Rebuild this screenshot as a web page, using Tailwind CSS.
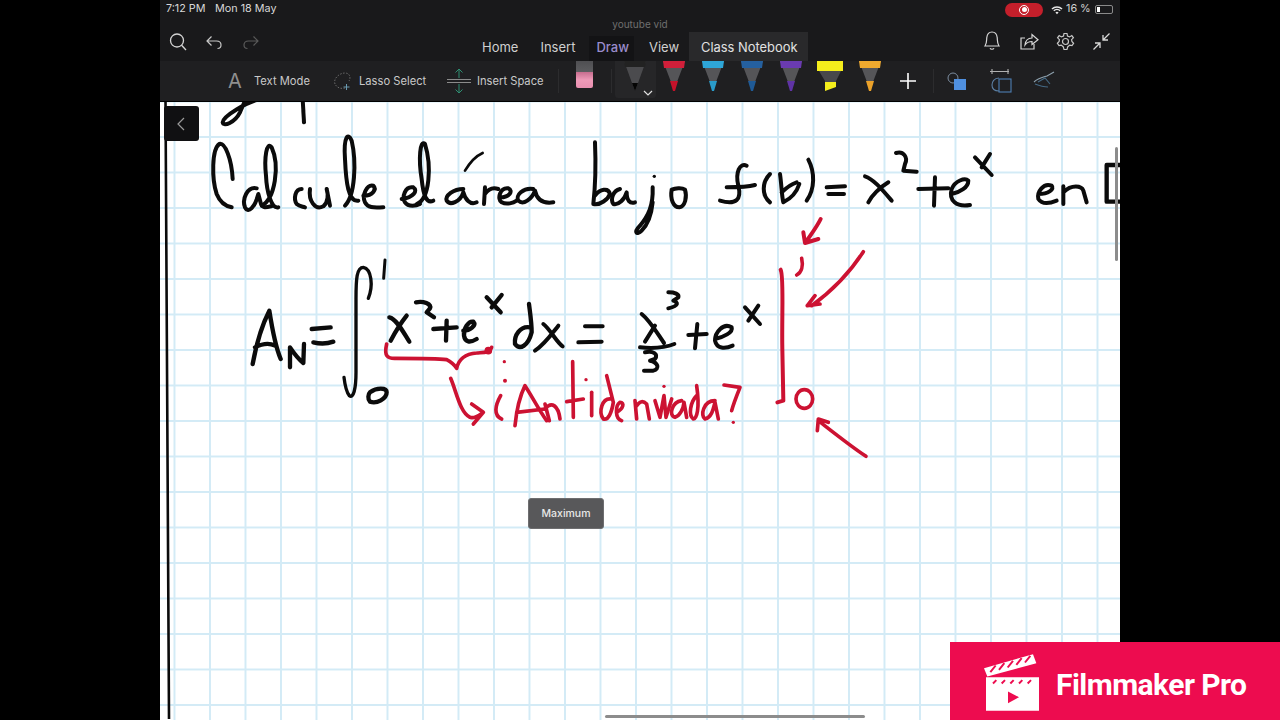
<!DOCTYPE html>
<html>
<head>
<meta charset="utf-8">
<script src="https://cdn.jsdelivr.net/npm/@tailwindcss/browser@4"></script>
</head>
<body class="bg-black">
<div class="relative w-[1280px] h-[720px] overflow-hidden bg-black font-['Inter',sans-serif]">
  <div class="mx-auto w-[960px] h-[720px] flex flex-col">
    <!-- header -->
    <header class="h-[61px] bg-[#19191b] relative">
      <div class="h-[18px] pt-[1px] flex items-center pl-[6px] pr-[7px] text-[10.8px] text-[#d8d8d8]">
        <span class="w-[49px]">7:12 PM</span>
        <span>Mon 18 May</span>
        <div class="ml-auto flex items-center">
          <div class="w-[38px] h-[14px] rounded-full bg-[#c41f2b] flex items-center justify-center">
            <div class="w-[10px] h-[10px] rounded-full border-[1.5px] border-white flex items-center justify-center"><div class="w-[5px] h-[5px] rounded-full bg-white"></div></div>
          </div>
          <svg class="ml-[8px]" width="12" height="10" viewBox="0 0 12 10"><path d="M1 4 A7 7 0 0 1 11 4 M2.8 5.8 A4.6 4.6 0 0 1 9.2 5.8" stroke="#e5e5e5" stroke-width="1.5" fill="none"/><path d="M4.4 7.4 A2.3 2.3 0 0 1 7.6 7.4 L6 9.2Z" fill="#e5e5e5"/></svg>
          <span class="ml-[3px] w-[29px] text-[#d0d0d0]">16 %</span>
          <div class="w-[18px] h-[9px] rounded-[2px] border border-[#8a8a8a] p-[1px]"><div class="w-[3px] h-full bg-white"></div></div>
        </div>
      </div>
      <div class="absolute left-0 right-0 top-[17px] text-center text-[10px] text-[#6f6f6f]">youtube vid</div>
      <div class="absolute left-[8px] top-[32px] flex items-center">
        <svg width="20" height="20" viewBox="0 0 20 20" fill="none" stroke="#d4d4d4" stroke-width="1.3"><circle cx="9" cy="8.5" r="6.5"/><path d="M13.6 13.2 L18 18"/></svg>
        <svg class="ml-[17px]" width="18" height="18" viewBox="0 0 18 18" fill="none" stroke="#c8c8c8" stroke-width="1.2"><path d="M6.5 3.5 L2 8 L6.5 12.5 M2 8 H11.5 C14.5 8 16 10 16 12 C16 14 14.5 15.5 12.5 15.5"/></svg>
        <svg class="ml-[19px]" width="18" height="18" viewBox="0 0 18 18" fill="none" stroke="#5a5a5a" stroke-width="1.2"><path d="M11.5 3.5 L16 8 L11.5 12.5 M16 8 H6.5 C3.5 8 2 10 2 12 C2 14 3.5 15.5 5.5 15.5"/></svg>
      </div>
      <nav class="absolute left-[322px] top-[32px] h-[29px] flex items-stretch text-[13px] text-[#d0d0d0]">
        <span class="flex items-center mt-[3px]">Home</span>
        <span class="flex items-center ml-[22px] mt-[3px]">Insert</span>
        <span class="flex items-center ml-[14px] pl-[7px] pr-[5px] bg-[#131315] text-[#9a8ccb] mt-[4px] pb-[1px] font-medium">Draw</span>
        <span class="flex items-center ml-[15px] mt-[3px]">View</span>
        <span class="flex items-center ml-[10px] pl-[12px] pr-[10px] pt-[2px] bg-[#29292b] text-[#e2e2e2] text-[12.9px]">Class Notebook</span>
      </nav>
      <div class="absolute right-[9px] top-[30px] flex items-center gap-[17px]">
        <svg width="20" height="22" viewBox="0 0 20 22" fill="none" stroke="#d8d8d8" stroke-width="1.2"><path d="M3 16 C5 13 4.5 10 4.8 7.5 C5.2 4 7.5 2 10 2 C12.5 2 14.8 4 15.2 7.5 C15.5 10 15 13 17 16 Z"/><path d="M8 18.2 C8.8 19.6 11.2 19.6 12 18.2"/></svg>
        <svg width="20" height="20" viewBox="0 0 20 20" fill="none" stroke="#d8d8d8" stroke-width="1.2"><path d="M6 7 H2 V18 H15 V13"/><path d="M6 14 C6.5 9.5 9.5 7 13 7 V3.5 L19 8.8 L13 13.5 V10.5 C10 10.5 7.8 11.5 6 14Z"/></svg>
        <svg width="19" height="19" viewBox="0 0 19 19" fill="none" stroke="#c8c8c8" stroke-width="1.2"><circle cx="9.5" cy="9.5" r="3"/><path d="M8 1.5 H11 L11.5 4 L13.6 4.9 L15.8 3.6 L17.4 5.8 L15.6 7.6 L15.9 9.5 L17.6 11.4 L16 13.6 L13.8 13.1 L11.8 14.7 L11 17.5 H8 L7.2 14.7 L5.2 13.1 L3 13.6 L1.4 11.4 L3.1 9.5 L3.4 7.6 L1.6 5.8 L3.2 3.6 L5.4 4.9 L7.5 4Z"/></svg>
        <svg width="19" height="19" viewBox="0 0 19 19" fill="none" stroke="#d8d8d8" stroke-width="1.3"><path d="M17.5 1.5 L11 8 M11 3 V8 H16"/><path d="M1.5 17.5 L8 11 M3 11 H8 V16"/></svg>
      </div>
    </header>
    <!-- toolbar -->
    <div class="h-[40px] bg-[#1f1f21] flex items-center text-[11.2px] text-[#c9c9c9] relative">
      <span class="ml-[68px] w-[26px] text-[20px] text-[#8f8f8f] font-normal leading-none">A</span>
      <span class="w-[55px] whitespace-nowrap">Text Mode</span>
      <svg class="ml-[23px]" width="20" height="20" viewBox="0 0 20 20" fill="none"><path d="M3 13 C1 8 7 2 13 2 C18 2 19 7 17 10 M13 17 C9 18 5 17 3 13" stroke="#6a6a6a" stroke-width="1" stroke-dasharray="1.5 1.5"/><path d="M14.5 13 V19 M11.5 16 H17.5" stroke="#6a9ab0" stroke-width="1"/></svg>
      <span class="ml-[7px] w-[68px] whitespace-nowrap">Lasso Select</span>
      <svg class="ml-[20px]" width="24" height="26" viewBox="0 0 24 26" fill="none"><path d="M0 11.5 H24 M0 14.5 H24" stroke="#8b8b8b" stroke-width="1"/><path d="M12 1 V10 M8.5 4.5 L12 1 L15.5 4.5 M12 16 V25 M8.5 21.5 L12 25 L15.5 21.5" stroke="#2f8f73" stroke-width="1"/></svg>
      <span class="ml-[6px] w-[68px] whitespace-nowrap">Insert Space</span>
      <div class="ml-[13px] w-px h-[24px] bg-[#2c2c2e]"></div>
      <!-- eraser -->
      <div class="ml-[17px] self-start w-[17px] h-[27px] rounded-b-[2px] bg-[linear-gradient(to_bottom,#4f4f52_0,#5d5d60_40%,#c86f90_42%,#ee9ab8_70%,#e88fb0_100%)]"></div>
      <div class="ml-[18px] w-px h-[24px] bg-[#2c2c2e]"></div>
      <!-- pens -->
      <div class="ml-[3px] self-start w-[41px] h-[37px] bg-[#262628] rounded-b-[3px] relative flex justify-center pr-[2px]">
        <svg width="24" height="30" viewBox="0 0 24 30"><path d="M1 0 H23 L15 22 L12 30 L9 22Z" fill="#4b4b4e"/><path d="M9 22 H15 L12 30Z" fill="#050505"/><path d="M1 0 H23 L22 6 H2Z" fill="#222"/></svg>
        <svg class="absolute right-[3px] bottom-[2px]" width="10" height="6" viewBox="0 0 10 6" fill="none" stroke="#e0e0e0" stroke-width="1.2"><path d="M1 1 L5 5 L9 1"/></svg>
      </div>
      <svg class="ml-[6px] self-start" width="24" height="30" viewBox="0 0 24 30"><path d="M1 0 H23 L15 21 L12 30 L9 21Z" fill="#555558"/><path d="M1 0 H23 L22 7 H2Z" fill="#d11f3a"/><path d="M8 20 H16 L13 30 H11Z" fill="#c4122a"/></svg>
      <svg class="ml-[15px] self-start" width="24" height="30" viewBox="0 0 24 30"><path d="M1 0 H23 L15 21 L12 30 L9 21Z" fill="#555558"/><path d="M1 0 H23 L22 7 H2Z" fill="#2ea6d8"/><path d="M8 20 H16 L13 30 H11Z" fill="#2a9bc9"/></svg>
      <svg class="ml-[15px] self-start" width="24" height="30" viewBox="0 0 24 30"><path d="M1 0 H23 L15 21 L12 30 L9 21Z" fill="#555558"/><path d="M1 0 H23 L22 7 H2Z" fill="#25609f"/><path d="M8 20 H16 L13 30 H11Z" fill="#1f5a96"/></svg>
      <svg class="ml-[15px] self-start" width="24" height="30" viewBox="0 0 24 30"><path d="M1 0 H23 L15 21 L12 30 L9 21Z" fill="#555558"/><path d="M1 0 H23 L22 7 H2Z" fill="#6a3bb0"/><path d="M8 20 H16 L13 30 H11Z" fill="#5f33a5"/></svg>
      <svg class="ml-[14px] self-start" width="26" height="30" viewBox="0 0 26 30"><path d="M0 0 H26 V10 H0Z" fill="#f5ee1c"/><path d="M2 10 H24 L19 20 V26 H8 V20Z" fill="#48484b"/><path d="M8 21 H19 V26 L8 30Z" fill="#f5ee1c"/></svg>
      <svg class="ml-[15px] self-start" width="24" height="30" viewBox="0 0 24 30"><path d="M1 0 H23 L15 21 L12 30 L9 21Z" fill="#555558"/><path d="M1 0 H23 L22 7 H2Z" fill="#f0a92e"/><path d="M8 20 H16 L13 30 H11Z" fill="#eaa12a"/></svg>
      <svg class="ml-[15px]" width="22" height="22" viewBox="0 0 22 22" stroke="#ffffff" stroke-width="1.6"><path d="M11 3 V19 M3 11 H19"/></svg>
      <div class="ml-[14px] w-px h-[24px] bg-[#2c2c2e]"></div>
      <svg class="ml-[12px]" width="22" height="20" viewBox="0 0 22 20" fill="none"><circle cx="7" cy="7" r="5" stroke="#7c8da0" stroke-width="1"/><rect x="8" y="8" width="12" height="11" fill="#4f90e0"/></svg>
      <svg class="ml-[21px]" width="24" height="26" viewBox="0 0 24 26" fill="none" stroke-width="1.1"><path d="M3 1 V6 M1 3.5 H20 M19 1 V6" stroke="#b0b0b0"/><rect x="10" y="11" width="12" height="13" stroke="#4d7fb5"/><path d="M10 10 C5 10 3 14 3 17 C3 21 6 23 10 23" stroke="#5c7fa3"/></svg>
      <svg class="ml-[19px]" width="24" height="22" viewBox="0 0 24 22" fill="none" stroke-width="1.1"><path d="M2 12 C6 8 12 7 15 6 L22 2" stroke="#8da0ad"/><path d="M6 12 L13 8 L18 14 M3 14 C8 16 13 17 16 17" stroke="#456a86"/></svg>
    </div>
    <!-- canvas -->
    <main class="relative flex-1 overflow-hidden bg-white mt-[1px] bg-[linear-gradient(to_right,#d3ebf6_1.5px,transparent_1.5px),linear-gradient(to_bottom,#d3ebf6_1.5px,transparent_1.5px)] bg-size-[35.5px_35.5px] bg-position-[13.5px_34px]">
      <svg class="absolute left-0 top-0 blur-[0.35px]" width="960" height="617" viewBox="160 103 960 617" fill="none" stroke-linecap="round" stroke-linejoin="round">
        <path d="M165.5 100 L169 720" stroke="#0a0a0a" stroke-width="2.6"/>
        <!-- zoom 3 origin -->
        <g transform="translate(160 100) scale(.33333)" stroke="#0b0b0b" stroke-width="12">
          <path d="M300 0 C260 10 190 50 188 70 C190 85 225 70 240 40 L255 5"/>
          <path d="M428 0 L432 70"/>
          <path d="M218 240 C215 180 195 130 178 135 C155 150 155 240 170 285 C180 310 200 322 215 325"/>
          <path d="M290 268 C262 262 245 300 255 325 C265 345 285 325 295 285 L303 315 C310 330 320 325 340 320"/>
          <path d="M305 320 C345 300 360 200 335 145 C320 125 312 175 318 230 C320 280 335 330 355 325"/>
          <path d="M425 270 C405 270 400 300 410 315 C418 322 425 322 435 325"/>
          <path d="M450 270 C445 305 465 335 490 322 C505 310 505 285 500 270 L510 320"/>
          <path d="M555 320 C585 290 590 190 575 125 C565 100 550 110 555 180 C558 250 565 310 595 305"/>
          <path d="M610 290 C640 290 650 270 640 260 C620 255 605 290 615 310 C625 330 650 325 670 325"/>
          <path d="M725 300 C760 295 775 275 760 265 C735 260 725 295 735 310 C745 325 770 320 780 315"/>
          <path d="M770 315 C810 300 815 200 795 135 C780 120 775 180 785 240 C790 290 800 315 820 305"/>
          <path d="M910 270 C880 270 855 290 860 305 C870 320 900 310 910 280 C915 300 930 320 950 310"/>
          <path d="M915 215 C930 190 950 170 968 162" stroke-width="8"/>
          <path d="M975 265 L972 315 M975 285 C985 270 1000 265 1015 270"/>
          <path d="M1020 295 C1050 295 1060 275 1045 268 C1020 265 1010 300 1025 310 C1040 318 1060 312 1070 305"/>
          <path d="M1120 270 C1090 265 1065 290 1075 305 C1090 320 1115 300 1125 275 C1130 300 1145 315 1180 310"/>
          <path d="M1305 130 C1308 200 1305 270 1300 315 C1320 320 1345 300 1350 285 C1345 265 1320 270 1305 290"/>
          <path d="M1380 270 C1360 275 1350 300 1360 315 C1375 320 1395 300 1400 280 C1400 305 1410 315 1425 310"/>
          <path d="M1478 265 C1480 320 1465 350 1440 380 C1420 400 1430 410 1445 395 C1465 375 1475 340 1478 310"/>
          <circle cx="1483" cy="232" r="5" fill="#0b0b0b" stroke="none"/>
        </g>
        <!-- zoom 4 origin -->
        <g transform="translate(640 100) scale(.33333)" stroke="#0b0b0b" stroke-width="12">
          <path d="M95 272 C90 300 100 325 118 325 C135 322 142 295 135 272 C125 265 105 268 95 272"/>
          <path d="M320 200 C300 190 285 220 295 260 C305 300 290 320 240 305"/>
          <path d="M260 265 C290 265 320 265 345 258"/>
          <path d="M390 225 C365 250 365 290 390 310"/>
          <path d="M420 225 C425 260 425 290 430 310 C450 300 470 280 478 255 M425 280 C440 265 455 255 470 250"/>
          <path d="M505 182 C525 220 525 270 500 305"/>
          <path d="M560 265 L615 262 M565 285 L612 285"/>
          <path d="M675 232 C700 240 725 270 755 305 M745 250 C720 265 695 290 685 310"/>
          <path d="M768 162 C790 155 805 175 795 195 L790 215 L830 218"/>
          <path d="M835 270 L925 268 M885 235 L882 320"/>
          <path d="M990 318 C950 325 925 305 935 270 C945 245 975 235 985 245 C985 265 960 280 935 285"/>
          <path d="M1005 175 L1055 228 M1050 165 L1025 205"/>
          <path d="M1195 285 C1225 285 1245 270 1235 260 C1210 250 1190 280 1195 300 C1205 315 1225 315 1250 305"/>
          <path d="M1270 262 L1270 315 M1270 280 C1295 255 1325 260 1330 275 L1340 310"/>
          <path d="M1445 198 L1400 198 L1400 308 L1445 308" stroke-width="13"/>
          <g stroke="#cc1232">
            <path d="M542 360 C530 385 510 410 497 430 M490 400 L495 432 L535 420" stroke-width="12"/>
          </g>
        </g>
        <!-- zoom 5 origin -->
        <g transform="translate(230 250) scale(.33333)" stroke="#0b0b0b" stroke-width="13">
          <path d="M68 345 C80 280 100 220 118 185 C125 230 135 290 152 330 M75 295 C95 285 115 280 135 290"/>
          <path d="M180 355 L180 295 C190 310 205 330 220 342 L222 285"/>
          <path d="M245 240 L302 235 M250 280 C270 285 290 285 310 278"/>
          <path d="M415 148 C430 110 425 60 400 55 C380 55 378 90 378 150 L378 370 C378 420 370 450 358 440 C350 430 345 410 342 385" stroke-width="10"/>
          <path d="M465 33 L461 88" stroke-width="9"/>
          <path d="M420 430 C440 415 470 415 470 430 C470 450 440 465 420 458 C412 450 415 435 420 430"/>
          <path d="M478 205 C500 210 520 250 538 278 M530 200 C510 225 490 260 482 275"/>
          <path d="M558 160 C580 155 605 165 600 178 L590 190 L612 205"/>
          <path d="M610 240 L680 235 M650 215 L648 275"/>
          <path d="M700 245 C720 245 740 230 730 218 C715 215 700 240 702 260 C705 280 720 282 740 270"/>
          <path d="M770 145 L812 190 M815 138 L785 175"/>
          <path d="M900 235 C870 230 852 260 855 285 C870 305 895 290 905 250 C905 220 900 190 897 165"/>
          <g stroke="#cc1232" stroke-width="11">
            <path d="M470 285 C462 320 470 330 500 328 C560 328 620 328 650 332 C665 340 675 350 680 358 C685 335 700 315 740 312 C760 310 780 312 785 295"/>
            <circle cx="775" cy="305" r="6" fill="#cc1232"/>
            <path d="M662 388 C680 430 690 490 720 505 C735 510 745 500 760 490 M725 465 L760 490 L730 525"/>
            <circle cx="823" cy="338" r="5" fill="#cc1232" stroke="none"/>
            <circle cx="825" cy="395" r="6" fill="#cc1232" stroke="none"/>
            <path d="M812 440 C795 470 790 500 815 510"/>
            <path d="M855 530 C860 480 870 440 885 410 C905 440 925 480 950 515 M860 490 L945 480"/>
          </g>
        </g>
        <!-- zoom 6 origin -->
        <g transform="translate(540 250) scale(.33333)" stroke="#0b0b0b" stroke-width="12">
          <path d="M10 225 C30 240 50 280 68 292 M55 230 C35 255 15 285 -15 305"/>
          <path d="M115 280 L185 278 M135 232 L188 232"/>
          <path d="M305 195 C330 215 350 250 372 282 M345 230 L315 278"/>
          <path d="M300 295 C330 298 370 298 403 285"/>
          <path d="M315 310 C340 305 355 315 345 330 L330 335 C355 340 360 360 340 365 L312 365"/>
          <path d="M385 130 C405 130 418 135 415 145 L400 155 C415 160 418 170 385 178"/>
          <path d="M445 258 L500 255 M472 225 L465 298"/>
          <path d="M525 270 C550 265 580 250 575 235 C550 220 525 250 525 275 C530 300 555 300 578 290"/>
          <path d="M615 175 L660 225 M655 170 L625 215"/>
          <g stroke="#cc1232" stroke-width="11">
            <path d="M15 465 L28 515 M15 480 C35 455 55 470 60 510"/>
            <path d="M98 338 L100 505 M80 458 L130 450"/>
            <path d="M155 430 L155 500"/>
            <circle cx="138" cy="392" r="5" fill="#cc1232" stroke="none"/>
            <path d="M215 450 C185 445 175 490 190 510 C205 515 215 490 220 460 C210 420 205 400 200 380"/>
            <path d="M230 490 C250 480 255 460 240 460 C225 470 225 510 245 515"/>
            <path d="M285 455 L290 510 M290 470 C300 455 310 455 320 465 L328 510"/>
            <circle cx="372" cy="412" r="5" fill="#cc1232" stroke="none"/>
            <path d="M345 455 L360 505 L372 440 L378 505 L395 450"/>
            <path d="M425 455 C395 460 385 500 405 505 C420 500 430 480 432 460 L440 505"/>
            <path d="M470 440 C450 460 445 500 460 510 C470 510 480 480 470 410"/>
            <path d="M525 455 C490 455 480 500 495 510 C515 505 520 480 525 460 L535 510"/>
            <path d="M552 408 L600 415 C590 440 580 465 575 485"/>
            <circle cx="580" cy="520" r="5" fill="#cc1232" stroke="none"/>
            <path d="M722 62 C732 80 725 200 727 300 L730 455 L712 460" stroke-width="12"/>
            <path d="M785 28 C790 50 785 70 770 78"/>
            <ellipse cx="793" cy="450" rx="25" ry="28"/>
            <path d="M970 8 C930 70 870 130 815 170 M802 170 L825 140 M802 170 L840 165"/>
            <path d="M978 622 C930 590 880 550 835 515 M832 545 L835 510 L865 520"/>
          </g>
        </g>
      </svg>
      <!-- scrollbars -->
      <div class="absolute right-[2px] top-[45px] w-[3px] h-[114px] bg-[#8c8c8c] rounded-full"></div>
      <div class="absolute left-[445px] bottom-[2px] w-[260px] h-[3px] bg-[#8c8c8c] rounded-full"></div>
      <!-- back tab -->
      <div class="absolute left-[4px] top-[4px] w-[35px] h-[35px] bg-[#101012] rounded-[3px] flex items-center justify-center pr-[1px]">
        <svg width="10" height="14" viewBox="0 0 10 14" fill="none" stroke="#9a9a9a" stroke-width="1.2"><path d="M8 1 L2 7 L8 13"/></svg>
      </div>
      <!-- tooltip -->
      <div class="absolute left-[368px] top-[396px] w-[76px] h-[31px] bg-[#58585a] border border-[#6e6e70] rounded-[3px] flex items-center justify-center text-[10.5px] font-medium text-[#e8e8e8]">Maximum</div>
    </main>
  </div>
  <!-- watermark -->
  <div class="absolute right-0 bottom-0 w-[330px] h-[78px] bg-[#ed0c4f] flex items-center pl-[34px] pt-[2px]">
    <svg width="55" height="57" viewBox="133 68 165 170">
      <g fill="#fff">
        <path d="M133 110 L280 68 L290 95 L143 135Z"/>
        <path d="M139 137 H298 V238 H139Z"/>
      </g>
      <g stroke="#ed0c4f" stroke-width="6" fill="none">
        <path d="M152 122 L168 102 M178 115 L194 95 M204 108 L220 88 M230 100 L246 80 M256 93 L272 73"/>
        <path d="M160 156 L170 146 M186 156 L196 146 M212 156 L222 146 M238 156 L248 146 M264 156 L274 146"/>
      </g>
      <path d="M205 180 L238 197 L205 215Z" fill="#ed0c4f"/>
    </svg>
    <span class="ml-[17px] mt-[6px] text-[30px] font-bold text-white font-['Roboto',sans-serif] whitespace-nowrap leading-none tracking-[-0.55px]">Filmmaker Pro</span>
  </div>
</div>
</body>
</html>
